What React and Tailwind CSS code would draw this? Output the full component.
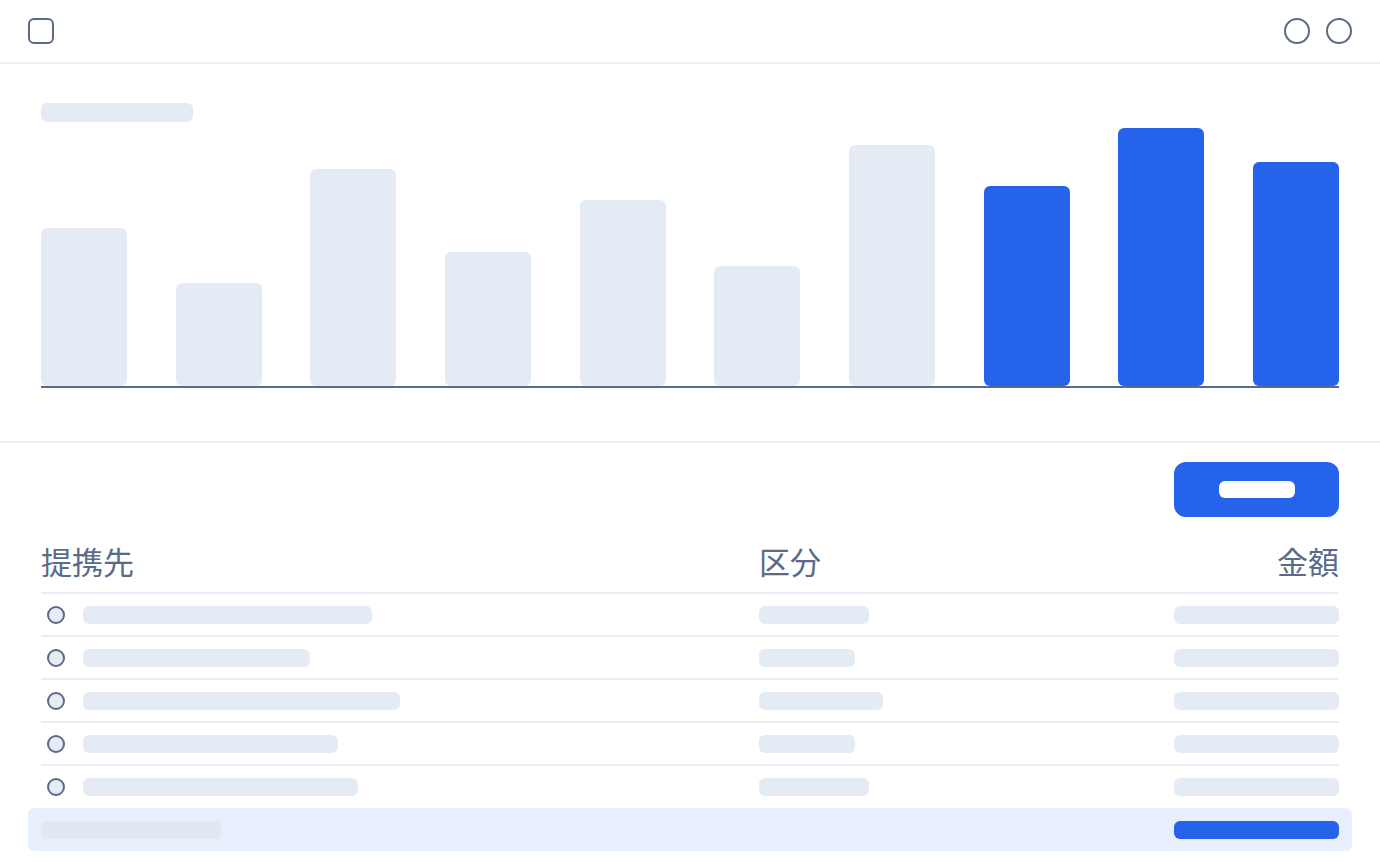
const bars = [
  { h: 158, on: false },
  { h: 103, on: false },
  { h: 217, on: false },
  { h: 134, on: false },
  { h: 186, on: false },
  { h: 120, on: false },
  { h: 241, on: false },
  { h: 200, on: true },
  { h: 258, on: true },
  { h: 224, on: true },
];

const rows = [
  { name: 289, kind: 110 },
  { name: 227, kind: 96 },
  { name: 317, kind: 124 },
  { name: 255, kind: 96 },
  { name: 275, kind: 110 },
];

const App = () => {
  return (
    <div
      className="w-[1380px] h-[862px] bg-white overflow-hidden"
      style={{ fontFamily: '"Noto Sans CJK JP", "Noto Sans", sans-serif' }}
    >
      <header className="h-[64px] flex items-center justify-between px-[28px] border-b-2 border-[#edf0f8]">
        <div className="w-[26px] h-[26px] rounded-[6px] border-2 border-[#5b6b87]" />
        <div className="flex gap-[16px]">
          <div className="w-[26px] h-[26px] rounded-full border-2 border-[#5b6b87]" />
          <div className="w-[26px] h-[26px] rounded-full border-2 border-[#5b6b87]" />
        </div>
      </header>

      <section className="px-[41px] pt-[39px] pb-[53px] border-b-2 border-[#edf0f8]">
        <div className="w-[152px] h-[19px] rounded-[6px] bg-[#e5ebf5]" />
        <div className="h-[264px] flex items-end justify-between">
          {bars.map((b, i) => (
            <div
              key={i}
              className={`w-[86px] rounded-[6px] ${b.on ? 'bg-[#2563eb]' : 'bg-[#e5ebf5]'}`}
              style={{ height: b.h }}
            />
          ))}
        </div>
        <div className="h-[2px] bg-[#5b6b87]" />
      </section>

      <section className="px-[41px] pt-[19px]">
        <div className="flex justify-end">
          <button className="w-[165px] h-[55px] rounded-[12px] bg-[#2563eb] flex items-center justify-center">
            <span className="block w-[76px] h-[17px] rounded-[6px] bg-white" />
          </button>
        </div>

        <div className="mt-[25px] pb-[13px] flex items-center border-b-2 border-[#e8edf7] text-[31px] leading-[37px] text-[#5b6b87]">
          <div className="w-[718px]">提携先</div>
          <div className="flex-1">区分</div>
          <div className="w-[165px] text-right">金額</div>
        </div>

        {rows.map((r, i) => (
          <div
            key={i}
            className={`flex items-center ${i < rows.length - 1 ? 'h-[43px] border-b-2 border-[#e8edf7]' : 'h-[42px]'}`}
          >
            <div className="w-[718px] flex items-center">
              <span className="ml-[6px] w-[18px] h-[18px] rounded-full border-2 border-[#5b6b87] bg-[#e6ebf4]" />
              <span className="ml-[18px] h-[18px] rounded-[6px] bg-[#e5ebf5]" style={{ width: r.name }} />
            </div>
            <div className="flex-1">
              <span className="block h-[18px] rounded-[6px] bg-[#e5ebf5]" style={{ width: r.kind }} />
            </div>
            <div className="w-[165px] h-[18px] rounded-[6px] bg-[#e5ebf5]" />
          </div>
        ))}

        <div className="-mx-[13px] px-[13px] h-[43px] rounded-[6px] bg-[#e8effc] flex items-center justify-between">
          <div className="w-[180px] h-[18px] rounded-[6px] bg-[#e2e8f2]" />
          <div className="w-[165px] h-[18px] rounded-[6px] bg-[#2563eb]" />
        </div>
      </section>
    </div>
  );
};

export default App;
